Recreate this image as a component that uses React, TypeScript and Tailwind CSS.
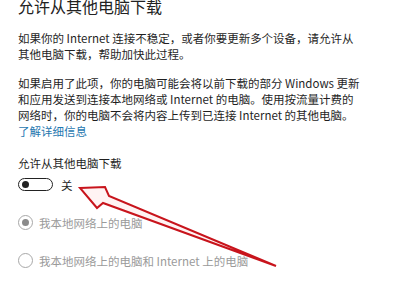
import React from "react";

const font = { fontFamily: '"Noto Sans CJK SC", "Noto Sans", sans-serif' };

export default function App() {
  return (
    <div className="relative w-[400px] h-[300px] overflow-hidden bg-white text-[#1f1f1f]" style={font}>
      <div className="flex flex-col pl-[18px]">
        <div className="text-[16px] leading-[20px] mt-[-4px] whitespace-nowrap text-[#222]">允许从其他电脑下载</div>
        <div className="mt-[14px] text-[11.5px] leading-[16px] whitespace-nowrap">
          <div>如果你的 Internet 连接不稳定，或者你要更新多个设备，请允许从</div>
          <div>其他电脑下载，帮助加快此过程。</div>
        </div>
        <div className="mt-[13px] text-[11.5px] leading-[16px] whitespace-nowrap">
          <div>如果启用了此项，你的电脑可能会将以前下载的部分 Windows 更新</div>
          <div>和应用发送到连接本地网络或 Internet 的电脑。使用按流量计费的</div>
          <div>网络时，你的电脑不会将内容上传到已连接 Internet 的其他电脑。</div>
          <div className="text-[#1f78b0]">了解详细信息</div>
        </div>
        <div className="mt-[16px] text-[11.5px] leading-[16px] whitespace-nowrap">允许从其他电脑下载</div>
        <div className="mt-[7px] flex items-center gap-[8px] h-[13px]">
          <div className="w-[35px] h-[13px] rounded-full border-[1.5px] border-[#222] flex items-center pl-[3px]">
            <div className="w-[7px] h-[7px] rounded-full bg-[#222]" />
          </div>
          <span className="text-[11.5px] leading-[16px]">关</span>
        </div>
        <div className="mt-[24px] flex items-center gap-[6px] h-[15px]">
          <div className="w-[15px] h-[15px] rounded-full border-[1.5px] border-[#a8a8a8] flex items-center justify-center">
            <div className="w-[7px] h-[7px] rounded-full bg-[#8a8a8a]" />
          </div>
          <span className="text-[11.5px] leading-[16px] text-[#9a9a9a] whitespace-nowrap">我本地网络上的电脑</span>
        </div>
        <div className="mt-[23px] flex items-center gap-[6px] h-[15px]">
          <div className="w-[15px] h-[15px] rounded-full border-[1.5px] border-[#a8a8a8]" />
          <span className="text-[11.5px] leading-[16px] text-[#9a9a9a] whitespace-nowrap">我本地网络上的电脑和 Internet 上的电脑</span>
        </div>
      </div>
      <svg className="absolute left-0 top-0" width="400" height="300" viewBox="0 0 400 300">
        <polygon
          points="80,188 105,187 109,196 276,266 103,203 97,208"
          fill="#fff3f3"
          stroke="#c8141c"
          strokeWidth="2"
          strokeLinejoin="miter"
        />
      </svg>
    </div>
  );
}
